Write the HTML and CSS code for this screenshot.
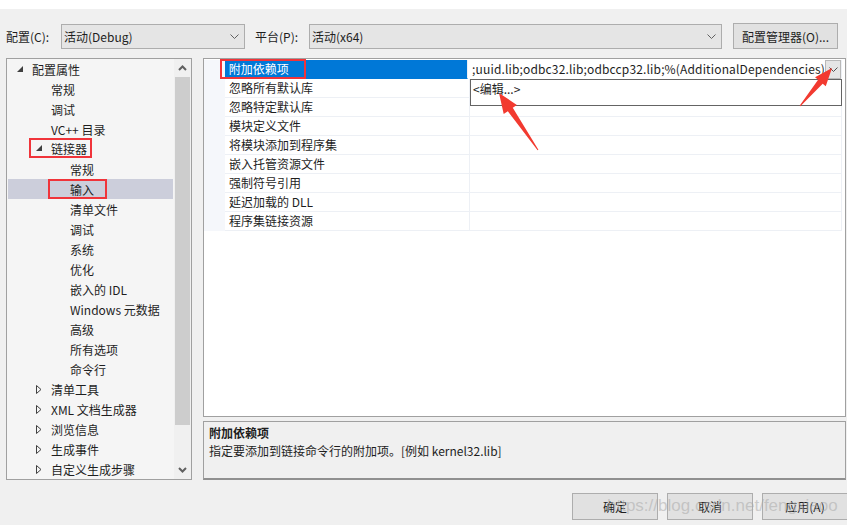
FILE: index.html
```html
<!DOCTYPE html>
<html lang="zh-CN">
<head>
<meta charset="utf-8">
<title>链接器 - 输入</title>
<link rel="stylesheet" href="styles.css">
</head>
<body>
<div class="page">
  <div class="top-strip"></div>

  <div class="toolbar">
    <span class="tb-label">配置(C):</span>
    <div class="combo combo-config"><span>活动(Debug)</span>
      <svg class="chev" width="9" height="5" viewBox="0 0 9 5"><polyline points="0.5,0.5 4.5,4.5 8.5,0.5" fill="none" stroke="#606060" stroke-width="1"/></svg>
    </div>
    <span class="tb-label tb-label2">平台(P):</span>
    <div class="combo combo-platform"><span>活动(x64)</span>
      <svg class="chev" width="9" height="5" viewBox="0 0 9 5"><polyline points="0.5,0.5 4.5,4.5 8.5,0.5" fill="none" stroke="#606060" stroke-width="1"/></svg>
    </div>
    <button class="btn btn-manager">配置管理器(O)...</button>
  </div>

  <div class="main">
    <div class="tree">
      <div class="tree-list">
        <div class="row lv0"><span class="twisty"><svg width="6" height="6" viewBox="0 0 6 6"><polygon points="6,0 6,6 0,6" fill="#404040"/></svg></span>配置属性</div>
        <div class="row lv1">常规</div>
        <div class="row lv1">调试</div>
        <div class="row lv1">VC++ 目录</div>
        <div class="row lv1-box"><span class="redbox box-linker"><span class="twisty"><svg width="6" height="6" viewBox="0 0 6 6"><polygon points="6,0 6,6 0,6" fill="#404040"/></svg></span>链接器</span></div>
        <div class="row lv2">常规</div>
        <div class="row lv2-box selected"><span class="redbox box-input">输入</span></div>
        <div class="row lv2">清单文件</div>
        <div class="row lv2">调试</div>
        <div class="row lv2">系统</div>
        <div class="row lv2">优化</div>
        <div class="row lv2">嵌入的 IDL</div>
        <div class="row lv2">Windows 元数据</div>
        <div class="row lv2">高级</div>
        <div class="row lv2">所有选项</div>
        <div class="row lv2">命令行</div>
        <div class="row lv1t"><span class="twisty"><svg width="6" height="9" viewBox="0 0 6 9"><polygon points="0.5,0.5 5,4.5 0.5,8.5" fill="none" stroke="#404040" stroke-width="1"/></svg></span>清单工具</div>
        <div class="row lv1t"><span class="twisty"><svg width="6" height="9" viewBox="0 0 6 9"><polygon points="0.5,0.5 5,4.5 0.5,8.5" fill="none" stroke="#404040" stroke-width="1"/></svg></span>XML 文档生成器</div>
        <div class="row lv1t"><span class="twisty"><svg width="6" height="9" viewBox="0 0 6 9"><polygon points="0.5,0.5 5,4.5 0.5,8.5" fill="none" stroke="#404040" stroke-width="1"/></svg></span>浏览信息</div>
        <div class="row lv1t"><span class="twisty"><svg width="6" height="9" viewBox="0 0 6 9"><polygon points="0.5,0.5 5,4.5 0.5,8.5" fill="none" stroke="#404040" stroke-width="1"/></svg></span>生成事件</div>
        <div class="row lv1t"><span class="twisty"><svg width="6" height="9" viewBox="0 0 6 9"><polygon points="0.5,0.5 5,4.5 0.5,8.5" fill="none" stroke="#404040" stroke-width="1"/></svg></span>自定义生成步骤</div>
      </div>
      <div class="vscroll">
        <div class="sb-arrow"><svg width="9" height="6" viewBox="0 0 9 6"><polyline points="1,5 4.5,1.5 8,5" fill="none" stroke="#606060" stroke-width="2"/></svg></div>
        <div class="sb-track"><div class="sb-thumb"></div></div>
        <div class="sb-arrow"><svg width="9" height="6" viewBox="0 0 9 6"><polyline points="1,1 4.5,4.5 8,1" fill="none" stroke="#606060" stroke-width="2"/></svg></div>
      </div>
    </div>

    <div class="right">
      <div class="grid">
        <div class="props">
          <div class="prop">
            <div class="gutter"></div>
            <div class="pname sel">附加依赖项<span class="redbox box-prop"></span></div>
            <div class="pvalue active"><span class="vtext">;uuid.lib;odbc32.lib;odbccp32.lib;%(AdditionalDependencies)</span>
              <span class="dropbtn"><svg width="9" height="5" viewBox="0 0 9 5"><polyline points="0.5,0.5 4.5,4.5 8.5,0.5" fill="none" stroke="#505050" stroke-width="1"/></svg></span>
            </div>
          </div>
          <div class="prop"><div class="gutter"></div><div class="pname">忽略所有默认库</div><div class="pvalue"></div></div>
          <div class="prop"><div class="gutter"></div><div class="pname">忽略特定默认库</div><div class="pvalue"></div></div>
          <div class="prop"><div class="gutter"></div><div class="pname">模块定义文件</div><div class="pvalue"></div></div>
          <div class="prop"><div class="gutter"></div><div class="pname">将模块添加到程序集</div><div class="pvalue"></div></div>
          <div class="prop"><div class="gutter"></div><div class="pname">嵌入托管资源文件</div><div class="pvalue"></div></div>
          <div class="prop"><div class="gutter"></div><div class="pname">强制符号引用</div><div class="pvalue"></div></div>
          <div class="prop"><div class="gutter"></div><div class="pname">延迟加载的 DLL</div><div class="pvalue"></div></div>
          <div class="prop"><div class="gutter"></div><div class="pname">程序集链接资源</div><div class="pvalue"></div></div>
        </div>
        <div class="popup">&lt;编辑...&gt;</div>
      </div>
      <div class="desc">
        <div class="desc-title">附加依赖项</div>
        <div class="desc-text">指定要添加到链接命令行的附加项。[例如 kernel32.lib]</div>
      </div>
    </div>
  </div>

  <div class="footer">
    <button class="btn fbtn">确定</button>
    <button class="btn fbtn">取消</button>
    <button class="btn fbtn">应用(A)</button>
  </div>

  <div class="watermark">https://blog.csdn.net/fengxiaoo</div>

  <svg class="arrows" width="847" height="525" viewBox="0 0 847 525">
    <polygon fill="#f23a30" points="538.41,149.72 512.77,107.81 516.89,104.98 499,93 503.69,114.02 507.81,111.19 537.59,150.28"/>
    <polygon fill="#f23a30" points="800.38,106.32 822.70,83.70 825.76,86.28 832,68 815.06,77.26 818.12,79.84 799.62,105.68"/>
  </svg>
</div>
</body>
</html>
```

FILE: styles.css
```css
* { box-sizing: border-box; }
html, body { margin: 0; padding: 0; }
body {
  width: 847px;
  height: 525px;
  overflow: hidden;
  background: #f0f0f0;
  font-family: "Noto Sans CJK SC", "Noto Sans", sans-serif;
  font-size: 12px;
  color: #1e1e1e;
}
.page {
  position: relative;
  width: 847px;
  height: 525px;
}
.top-strip {
  height: 9px;
  background: #ffffff;
}

/* toolbar */
.toolbar {
  display: flex;
  align-items: center;
  height: 26px;
  margin-top: 14px;
  padding-left: 6px;
}
.tb-label {
  width: 55px;
  line-height: 25px;
}
.tb-label2 {
  width: 54px;
  margin-left: 10px;
}
.combo {
  height: 25px;
  border: 1px solid #adadad;
  background: #e5e5e5;
  display: flex;
  align-items: center;
  justify-content: space-between;
  padding: 0 5px 0 2px;
}
.combo-config { width: 184px; }
.combo-platform { width: 413px; }
.chev { display: block; }
.btn {
  font-family: inherit;
  font-size: 12px;
  color: #1e1e1e;
  background: #e1e1e1;
  border: 1px solid #adadad;
  padding: 0;
  margin: 0;
}
.btn-manager {
  width: 105px;
  height: 26px;
  margin-left: 11px;
}

/* main */
.main {
  display: flex;
  margin-top: 9px;
  padding-left: 6px;
  height: 422px;
}
.tree {
  width: 186px;
  height: 422px;
  border: 1px solid #a0a0a0;
  background: #f5f5f5;
  display: flex;
}
.tree-list {
  flex: 1;
}
.row {
  height: 20px;
  display: flex;
  align-items: center;
  white-space: nowrap;
  margin-right: 1px;
}
.twisty {
  display: inline-flex;
  align-items: center;
  width: 15px;
  height: 20px;
}
.twisty svg { display: block; }
.lv0 { padding-left: 10px; }
.lv1 { padding-left: 44px; }
.lv1t { padding-left: 29px; }
.lv2 { padding-left: 63px; }
.lv1-box { padding-left: 22px; }
.lv2-box { padding-left: 41px; }
.selected {
  background: #cccedb;
  margin-left: 1px;
  padding-left: 40px;
}
.redbox {
  border: 2px solid #f0343a;
}
.box-linker {
  display: inline-flex;
  align-items: center;
  height: 20px;
  margin-top: -2px;
  padding: 0 3px 0 5px;
}
.box-input {
  display: inline-flex;
  align-items: center;
  height: 20px;
  padding: 0 11px 0 20px;
}
.vscroll {
  width: 17px;
  display: flex;
  flex-direction: column;
  background: #f0f0f0;
}
.sb-arrow {
  height: 18px;
  display: flex;
  align-items: center;
  justify-content: center;
}
.sb-track {
  flex: 1;
  padding: 0 1px;
}
.sb-thumb {
  height: 348px;
  background: #cdcdcd;
}

.right {
  margin-left: 11px;
  width: 643px;
  display: flex;
  flex-direction: column;
}
.grid {
  position: relative;
  height: 359px;
  border: 1px solid #a0a0a0;
  background: #ffffff;
  padding: 1px 3px 0 0;
}
.prop {
  display: flex;
  height: 19px;
}
.gutter {
  width: 21px;
  background: #f5f7fb;
}
.pname {
  position: relative;
  width: 245px;
  padding-left: 4px;
  line-height: 18px;
  border-bottom: 1px solid #edf0f5;
  border-right: 1px solid #edf0f5;
  white-space: nowrap;
}
.pname.sel {
  background: #0078d7;
  color: #ffffff;
  border-bottom-color: #0078d7;
}
.box-prop {
  position: absolute;
  left: -5px;
  top: -1px;
  width: 86px;
  height: 20px;
}
.pvalue {
  flex: 1;
  display: flex;
  align-items: center;
  justify-content: space-between;
  border-bottom: 1px solid #edf0f5;
  border-right: 1px solid #edf0f5;
  white-space: nowrap;
}
.pvalue.active { border-bottom-color: #ffffff; }
.vtext {
  padding-left: 4px;
  line-height: 18px;
  letter-spacing: 0.15px;
}
.dropbtn {
  width: 16px;
  height: 19px;
  margin-bottom: -1px;
  display: flex;
  align-items: center;
  justify-content: center;
  background: #e5e5e5;
  border: 1px solid #b8b8b8;
}
.popup {
  position: absolute;
  left: 266px;
  top: 20px;
  width: 372px;
  height: 27px;
  border: 1px solid #646464;
  background: #ffffff;
  padding-left: 2px;
  line-height: 18px;
}
.desc {
  margin-top: 4px;
  height: 59px;
  border: 1px solid #a0a0a0;
  border-bottom: 2px solid #909090;
  background: #f0f0f0;
  padding: 2px 5px;
}
.desc-title {
  font-weight: bold;
  line-height: 18px;
}
.desc-text {
  line-height: 18px;
}

/* footer */
.footer {
  display: flex;
  justify-content: flex-end;
  gap: 9px;
  margin-top: 13px;
  margin-right: -1px;
}
.fbtn {
  width: 86px;
  height: 27px;
}

.watermark {
  position: absolute;
  left: 607px;
  top: 496px;
  font-family: "Liberation Sans", Arial, sans-serif;
  font-size: 17px;
  color: rgba(170, 170, 170, 0.55);
  white-space: nowrap;
  pointer-events: none;
}
.arrows {
  position: absolute;
  left: 0;
  top: 0;
  pointer-events: none;
}
```
